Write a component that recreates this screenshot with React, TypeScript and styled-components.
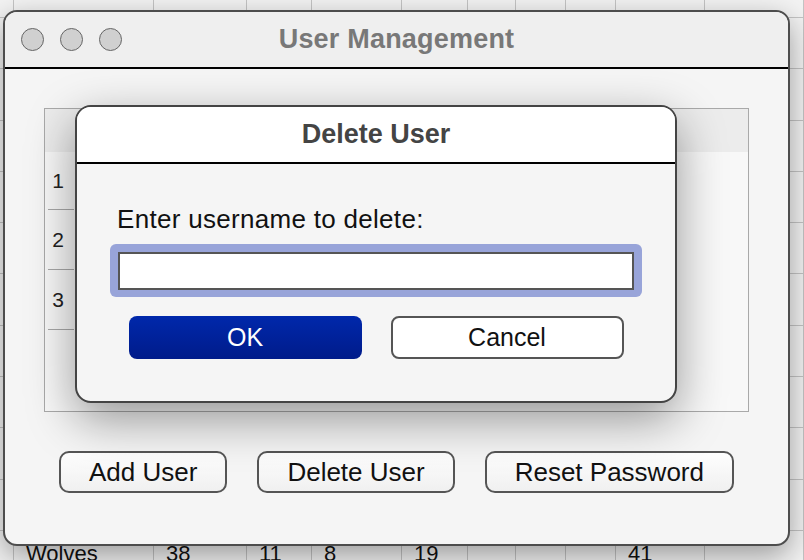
import styled, { createGlobalStyle } from 'styled-components';

const GlobalStyle = createGlobalStyle`
  body {
    margin: 0;
    background: #ececec;
    font-family: "Liberation Sans", Arial, Helvetica, sans-serif;
  }
`;

const Page = styled.div`
  position: relative;
  width: 804px;
  height: 560px;
  overflow: hidden;
  background: #ececec;
`;

// the spreadsheet that sits behind the window
const BackTable = styled.div`
  display: grid;
  grid-template-columns: 14px 140px 93px 65px 90px 66px 48px 50px 50px 89px 1fr;
  grid-template-rows: 48px repeat(10, 51.3px) 48px;
  margin-top: -30px;
`;

const BackCell = styled.div`
  display: flex;
  align-items: center;
  padding-left: 12px;
  border-right: 1px solid #c4c4c4;
  border-bottom: 1px solid #c4c4c4;
  background: #f3f3f3;
  font-size: 22px;
  color: #111;
  white-space: nowrap;
  overflow: hidden;
`;

const Window = styled.div`
  position: absolute;
  left: 3px;
  top: 10px;
  width: 787px;
  height: 536px;
  box-sizing: border-box;
  display: flex;
  flex-direction: column;
  border: 2px solid #4d4d4d;
  border-radius: 14px;
  background: #f5f5f5;
  box-shadow: 0 10px 30px rgba(0, 0, 0, 0.36);
  overflow: hidden;
`;

const TitleBar = styled.div`
  display: grid;
  grid-template-columns: 1fr auto 1fr;
  align-items: center;
  height: 55px;
  padding: 0 16px;
  border-bottom: 2px solid #000;
  background: #efefef;
`;

const Lights = styled.div`
  display: flex;
  gap: 16px;
`;

const Light = styled.span`
  width: 23px;
  height: 23px;
  box-sizing: border-box;
  border-radius: 50%;
  border: 1.5px solid #666;
  background: #d0d0d0;
`;

const WindowTitle = styled.div`
  font-size: 27px;
  font-weight: 700;
  letter-spacing: 0.2px;
  color: #787878;
`;

const WindowBody = styled.div`
  display: flex;
  flex-direction: column;
  padding: 39px 39px 0;
`;

const Panel = styled.div`
  height: 304px;
  box-sizing: border-box;
  display: grid;
  grid-template-columns: 32px 1fr;
  grid-template-rows: 43px 58px 60px 60px 1fr;
  border: 1px solid #a9a9a9;
  background: #f8f8f8;
`;

const PanelHeader = styled.div`
  grid-column: 1 / -1;
  background: #ececec;
`;

const RowHead = styled.div`
  grid-column: 1;
  display: flex;
  align-items: center;
  justify-content: center;
  padding-right: 6px;
  font-size: 21px;
  color: #222;
  background: linear-gradient(#a8a8a8, #a8a8a8) center bottom / 26px 1px no-repeat;
`;

const ButtonRow = styled.div`
  display: flex;
  justify-content: center;
  gap: 30px;
  margin-top: 39px;
`;

const Button = styled.button`
  height: 42px;
  padding: 0 28px;
  border: 2px solid #555;
  border-radius: 10px;
  background: linear-gradient(#fefefe, #f0f0f0);
  font-family: inherit;
  font-size: 26px;
  color: #111;
`;

const Dialog = styled.div`
  position: absolute;
  left: 75px;
  top: 105px;
  width: 602px;
  height: 298px;
  box-sizing: border-box;
  display: flex;
  flex-direction: column;
  border: 2px solid #444;
  border-radius: 16px;
  background: #f5f5f5;
  box-shadow: 0 16px 48px rgba(0, 0, 0, 0.4);
  overflow: hidden;
`;

const DialogHeader = styled.div`
  display: flex;
  align-items: center;
  justify-content: center;
  height: 55px;
  border-bottom: 2px solid #000;
  background: #fff;
  font-size: 27px;
  font-weight: 700;
  color: #444;
`;

const DialogBody = styled.div`
  display: flex;
  flex-direction: column;
  padding: 40px 33px 0;
`;

const Label = styled.label`
  margin: 0 0 10px 7px;
  font-size: 26px;
  line-height: 30px;
  letter-spacing: 0.3px;
  color: #111;
`;

const FocusRing = styled.div`
  padding: 8px 8px 7px;
  border-radius: 6px;
  background: #98a4d9;
`;

const Input = styled.input`
  display: block;
  width: 100%;
  height: 38px;
  box-sizing: border-box;
  border: 2px solid #555;
  background: #fff;
  outline: none;
`;

const ActionRow = styled.div`
  display: flex;
  justify-content: center;
  gap: 29px;
  margin-top: 19px;
`;

const ActionButton = styled.button<{ $primary?: boolean }>`
  width: 233px;
  height: 43px;
  box-sizing: border-box;
  border-radius: 8px;
  border: ${p => (p.$primary ? 'none' : '2px solid #555')};
  background: ${p => (p.$primary ? 'linear-gradient(#0028ab, #001b8a)' : '#fff')};
  color: ${p => (p.$primary ? '#fff' : '#111')};
  font-family: inherit;
  font-size: 25px;
`;

const bottomRow = ['', 'Wolves', '38', '11', '8', '19', '', '', '', '41', ''];

const App = () => {
    const rows: string[][] = [];
    for (let i = 0; i < 11; i++) rows.push(Array(11).fill(''));
    rows.push(bottomRow);

    return (
        <>
            <GlobalStyle />
            <Page>
                <BackTable>
                    {rows.map((row, r) =>
                        row.map((cell, c) => <BackCell key={`${r}-${c}`}>{cell}</BackCell>)
                    )}
                </BackTable>

                <Window>
                    <TitleBar>
                        <Lights>
                            <Light />
                            <Light />
                            <Light />
                        </Lights>
                        <WindowTitle>User Management</WindowTitle>
                        <div />
                    </TitleBar>
                    <WindowBody>
                        <Panel>
                            <PanelHeader />
                            <RowHead>1</RowHead>
                            <RowHead>2</RowHead>
                            <RowHead>3</RowHead>
                        </Panel>
                        <ButtonRow>
                            <Button>Add User</Button>
                            <Button>Delete User</Button>
                            <Button>Reset Password</Button>
                        </ButtonRow>
                    </WindowBody>
                </Window>

                <Dialog>
                    <DialogHeader>Delete User</DialogHeader>
                    <DialogBody>
                        <Label>Enter username to delete:</Label>
                        <FocusRing>
                            <Input />
                        </FocusRing>
                        <ActionRow>
                            <ActionButton $primary>OK</ActionButton>
                            <ActionButton>Cancel</ActionButton>
                        </ActionRow>
                    </DialogBody>
                </Dialog>
            </Page>
        </>
    );
};

export default App;
